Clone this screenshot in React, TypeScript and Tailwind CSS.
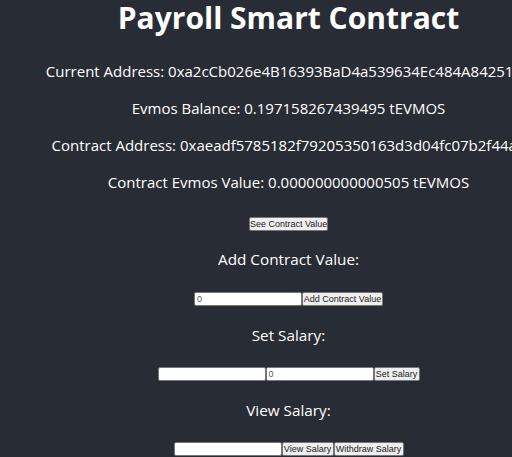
import React from "react";

const field = "h-[14px] w-[108px] bg-white border border-[#767676] rounded-[2px] px-[2px] text-[9px] leading-[12px] text-[#555] outline-none font-['Liberation_Sans',Arial,sans-serif]";
const btn = "h-[14px] bg-[#efefef] border border-[#767676] rounded-[2px] text-[9px] leading-[12px] text-[#222] whitespace-nowrap overflow-hidden font-['Liberation_Sans',Arial,sans-serif]";

export default function App() {
    return (
        <main className="w-full h-[457px] overflow-hidden bg-[#282c34] text-white font-['Open_Sans','Noto_Sans',sans-serif]">
            <div className="w-[577px] flex flex-col items-center text-center">
                <h1 className="text-[30px] font-bold leading-[36px]">Payroll Smart Contract</h1>

                <p className="mt-[25px] text-[15px] leading-[21px] whitespace-nowrap">
                    Current Address: 0xa2cCb026e4B16393BaD4a539634Ec484A842519d
                </p>
                <p className="mt-4 text-[15px] leading-[21px] whitespace-nowrap">
                    Evmos Balance: 0.197158267439495 tEVMOS
                </p>
                <p className="mt-4 text-[15px] leading-[21px] whitespace-nowrap">
                    Contract Address: 0xaeadf5785182f79205350163d3d04fc07b2f44a1
                </p>
                <p className="mt-4 text-[15px] leading-[21px] whitespace-nowrap">
                    Contract Evmos Value: 0.000000000000505 tEVMOS
                </p>

                <button className={`${btn} mt-[24px] w-[79px]`}>See Contract Value</button>

                <h3 className="mt-4 text-[15.3px] leading-[24px]">Add Contract Value:</h3>
                <div className="mt-[21px] flex">
                    <input className={field} defaultValue="0" />
                    <button className={`${btn} w-[81px]`}>Add Contract Value</button>
                </div>

                <h3 className="mt-[17px] text-[15.3px] leading-[24px]">Set Salary:</h3>
                <div className="mt-[20px] flex">
                    <input className={field} defaultValue="" />
                    <input className={`${field} w-[107px]`} defaultValue="0" />
                    <button className={`${btn} w-[46px]`}>Set Salary</button>
                </div>

                <h3 className="mt-[17px] text-[15.3px] leading-[24px]">View Salary:</h3>
                <div className="mt-[20px] flex">
                    <input className={`${field} w-[107px]`} defaultValue="" />
                    <button className={`${btn} w-[52px]`}>View Salary</button>
                    <button className={`${btn} w-[70px]`}>Withdraw Salary</button>
                </div>
            </div>
        </main>
    );
}
